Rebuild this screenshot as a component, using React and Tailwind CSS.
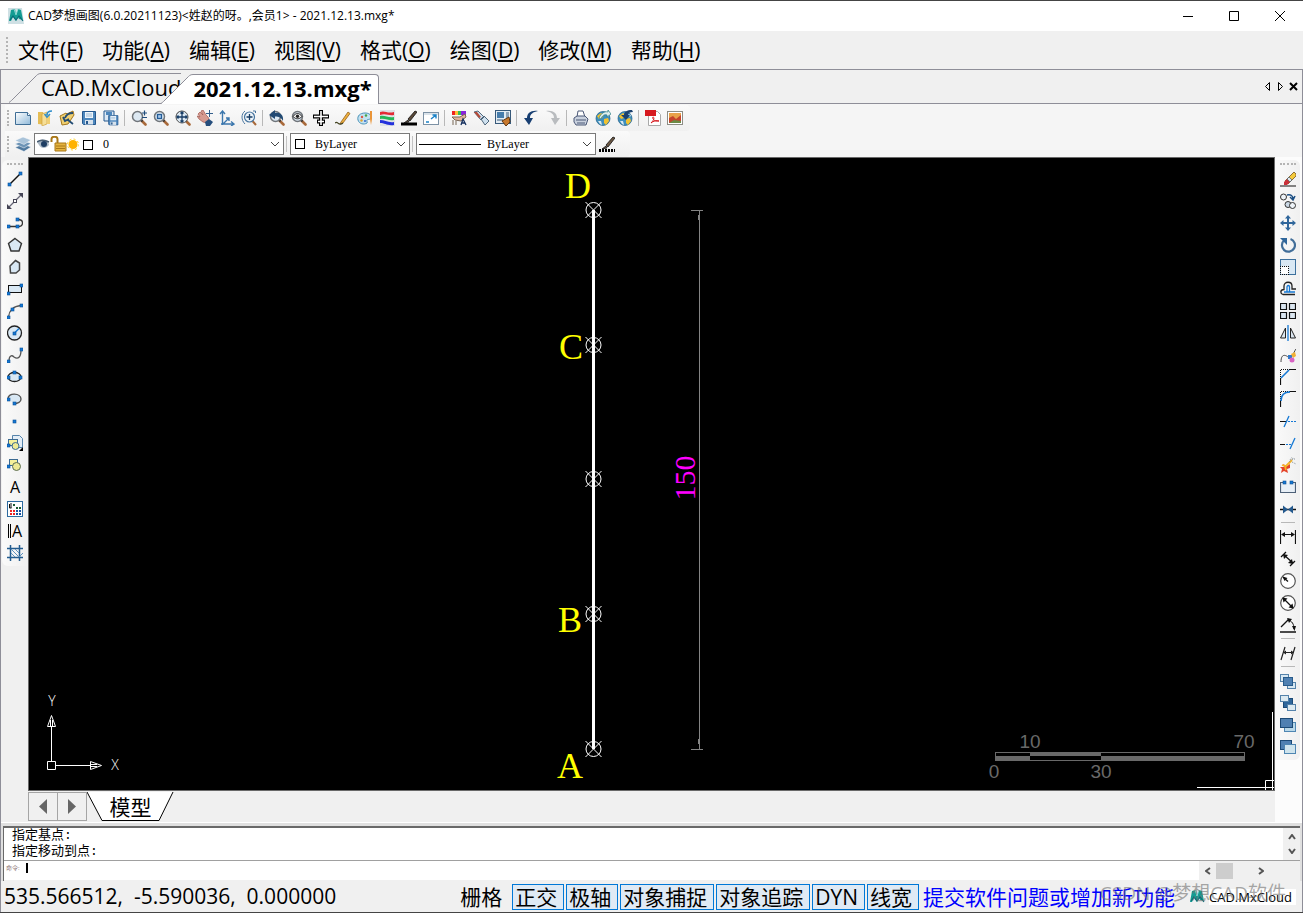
import { useState } from "react";

const MENUS = [
  ["文件", "F"],
  ["功能", "A"],
  ["编辑", "E"],
  ["视图", "V"],
  ["格式", "O"],
  ["绘图", "D"],
  ["修改", "M"],
  ["帮助", "H"],
];

const MODES = ["正交", "极轴", "对象捕捉", "对象追踪", "DYN", "线宽"];

// blue grip square used by most of the draw icons
function Grip({ x, y }) {
  return <rect x={x - 1} y={y - 1} width="3" height="3" fill="#1478d4" stroke="#0b4f94" strokeWidth=".6" />;
}

function Lens({ children }) {
  return (
    <>
      <path d="M10 10l4.5 4.5" stroke="#a8693a" strokeWidth="2.6" strokeLinecap="round" />
      <path d="M9.5 9.5l2 2" stroke="#333" strokeWidth="2" />
      <circle cx="6.5" cy="6.5" r="5" fill="#dce8f2" stroke="#70757a" strokeWidth="1.5" />
      {children}
    </>
  );
}

function Globe({ children }) {
  return (
    <>
      <circle cx="8" cy="8.5" r="7" fill="#3f8fbd" stroke="#215f86" strokeWidth=".7" />
      <path d="M2 6l4-3 3 2-2 3-3 1zM9 9l4-1 1 3-3 4-2-2z" fill="#f2c230" />
      <path d="M3 11l3 0 1 4-2-1zM11 4l3 1-1 2z" fill="#d9e8ef" />
      {children}
    </>
  );
}

const floppy = (
  <>
    <path d="M1.5 1.5h13v13h-12l-1-1z" fill="#4d87bd" stroke="#25588e" />
    <rect x="4" y="2" width="8" height="6" fill="#eef5fb" />
    <path d="M5 4h6M5 6h6" stroke="#9bb9d4" />
    <rect x="4" y="10" width="8" height="4.5" fill="#d7e2ec" />
    <rect x="5" y="11" width="2" height="3" fill="#25588e" />
  </>
);

const sheet = (
  <>
    <defs>
      <linearGradient id="sheet" x1="0" y1="0" x2="1" y2="1">
        <stop offset="0" stopColor="#fff" />
        <stop offset="1" stopColor="#8fb9d9" />
      </linearGradient>
    </defs>
    <path d="M.5 2.5h12l3 3v9H.5z" fill="url(#sheet)" stroke="#3f6e96" />
    <path d="M12.5 2.5v3h3" fill="#fff" stroke="#3f6e96" />
  </>
);

const MAIN_TOOLS = [
  [
    ["新建", sheet],
    ["打开", <>
      <path d="M1 2h5l1 2h2v11l-8-1z" fill="#e5bd55" />
      <path d="M5 4l5-2v12l-5 2z" fill="#f6df97" stroke="#c99b35" strokeWidth=".6" />
      <path d="M10 5h3v9h-3z" fill="#f0cf77" />
      <path d="M15 1c-3 0-5 1-5 4M7.500 4l2.500 3 3-3" stroke="#2e8ecb" strokeWidth="1.6" fill="none" />
    </>],
    ["打开云图", <>
      <path d="M1 6l6-3 1 1 6-3 1 4-6 9-6 1z" fill="#efcf70" stroke="#a2771e" />
      <path d="M14 3c-5 0-7 2-8 5M4 7l2 4 4-2M9 10l5 4" stroke="#244d74" strokeWidth="1.8" fill="none" />
    </>],
    ["保存", floppy],
    ["另存为", <>
      <path d="M1 1h10v10H1z" fill="#dce8f4" stroke="#25588e" />
      <path d="M3 2h6v3H3z" fill="#4d87bd" />
      <g transform="translate(4.5 4.5) scale(.72)">{floppy}</g>
    </>],
  ],
  [
    ["实时缩放", <><Lens /><path d="M11 3h5M13.5 .5v5M11 7.5h5" stroke="#1f4c7c" strokeWidth="1.2" /></>],
    ["窗口缩放", <Lens><rect x="4.5" y="4.5" width="4" height="4" fill="#a9c9ea" stroke="#235c98" strokeWidth="1.3" /></Lens>],
    ["范围缩放", <Lens><circle cx="7" cy="7" r="6" fill="#dce8f2" stroke="#555" /><path d="M7 2v10M2 7h10M5.5 3.5L7 2l1.5 1.5M5.5 10.5L7 12l1.5-1.5M3.5 5.5L2 7l1.5 1.5M10.5 5.5L12 7l-1.5 1.5" stroke="#173d66" fill="none" strokeWidth="1.3" /></Lens>],
    ["平移", <>
      <path d="M1 4l2-2 3 3-2-4 2-1 3 5 2 2 1 2-2 4-4-1-4-3-2-3 3 1z" fill="#d69b91" stroke="#a0574f" strokeWidth=".7" />
      <path d="M8 12l4-3 4 3-3 4H9z" fill="#254d7c" />
      <path d="M12.5 0v7M9 3.5h7" stroke="#335f8c" />
    </>],
    ["坐标系", <path d="M3.5 15V2M1 4l2.5-3L6 4M2 14h13M12 11.5l3 2.5-3 2M4 14l6-6M7 8h3v3" stroke="#3c77ad" strokeWidth="1.4" fill="none" />],
    ["动态缩放", <>
      <path d="M11.5 11l3.500 4" stroke="#a8693a" strokeWidth="2" />
      <circle cx="8.5" cy="7" r="5" fill="#edf4fa" stroke="#47759f" strokeWidth="1.2" />
      <path d="M8.5 4v6M5.500 7h6" stroke="#173d66" strokeWidth="1.3" />
      <path d="M4 1C0 4 0 10 4 14M12 1h2.500v2" stroke="#47759f" fill="none" />
    </>],
  ],
  [
    ["上一视图", <Lens><path d="M14 11c1-7-4-9-8-8V0L0 5l6 4V6.500c4 0 6 1 8 4.500z" fill="#224a73" /></Lens>],
    ["查看", <Lens><path d="M2 6.5c3-4 6-4 9 0-3 3-6 3-9 0z" fill="#fff" stroke="#222" /><circle cx="6.5" cy="6.3" r="1.7" fill="#222" /></Lens>],
    ["对齐", <>
      <path d="M8 0v16M0 6.500h16M4 11.500h8" stroke="#000" strokeWidth="4" />
      <path d="M8 1v14M1 6.500h14M5 11.500h6" stroke="#fff" strokeWidth="1.6" />
    </>],
    ["画笔", <>
      <path d="M6 12l7-10 2 1.5L8 13l-3 1z" fill="#edb13e" stroke="#95601d" strokeWidth=".8" />
      <path d="M0 13c3-3 3 4 8 0" stroke="#442" fill="none" strokeWidth="1.3" />
    </>],
    ["颜色", <>
      <path d="M8 3c-5 0-8 3-7 7s6 5 9 3c1-1-1-2 0-3s4 0 4-3-3-4-6-4z" fill="#c3e2f1" stroke="#4a93b8" />
      <circle cx="5" cy="7" r="1.2" fill="#d54" /><circle cx="9" cy="5.5" r="1.2" fill="#47a447" /><circle cx="4.5" cy="10.5" r="1.2" fill="#e0a22e" /><circle cx="8" cy="11" r="1" fill="#36c" />
      <path d="M13 1h2v8l-1 6-1-6z" fill="#ea9538" />
    </>],
    ["图层颜色", <>
      <rect x="1" y="0" width="15" height="16" fill="#dfe3e6" />
      <path d="M1 2c5-2 7 2 14 0v3C9 6 7 3 1 5z" fill="#e42a34" /><path d="M1 6c5-1 8 2 14 1v3C9 11 7 8 1 9z" fill="#26b657" /><path d="M1 10c5 0 8 3 14 2v3c-7 1-9-2-14-2z" fill="#2431dc" />
    </>],
    ["线型", <><path d="M0 14h16" stroke="#000" strokeWidth="3" /><path d="M3 13l4-3 1 2zM7 9L14 1l2 1-7 9z" fill="#5c4a38" stroke="#111" strokeWidth=".8" /></>],
    ["全屏", <><rect x=".5" y="2.5" width="15" height="12" fill="#fff" stroke="#7c91a4" /><path d="M1 4h14" stroke="#b5c6d4" /><path d="M3 12h3M8 9l5-4M9.5 5H13v3.5" stroke="#1a82c8" strokeWidth="1.4" fill="none" /></>],
  ],
  [
    ["特性匹配", <>
      <path d="M1 1h3v4H1z" fill="#e22" /><path d="M4 1h3v4H4z" fill="#fb3" /><path d="M7 1h3v4H7z" fill="#3b5" /><path d="M10 1h5v4h-5z" fill="#82d" />
      <path d="M1 7h8l5-3 1 3-5 4-6-1zM2 10v5M5 11v4" fill="#e3b39c" stroke="#765" />
      <path d="M10 15l2-6 3 6M11 13h3" stroke="#16315f" fill="none" strokeWidth="1.3" />
    </>],
    ["清理", <><path d="M1 2l4-1 6 6-3 3zM8 9l3-3 5 5-4 4z" fill="#cfe1ef" stroke="#50677b" /><path d="M1 2l5 6 2-1-4-5z" fill="#b44b39" /></>],
    ["图块", <><rect x=".5" y=".5" width="15" height="13" fill="#e3ebf1" stroke="#37597a" /><rect x="2" y="2" width="7" height="6" fill="#467cab" /><path d="M11 3h3M11 5h3M11 7h3M2 10h6" stroke="#37597a" /><path d="M7 11l7-4 1 5-4 4z" fill="#c7782d" stroke="#613611" /></>],
  ],
  [
    ["撤销", <path d="M15 1C8 0 4 3 4 8H1l5 7 4-7H7c0-4 3-6 8-7z" fill="#183f72" />],
    ["重做", <path d="M1 1c7-1 11 2 11 7h3l-5 7-4-7h3c0-4-3-6-8-7z" fill="#b9bcbf" />],
  ],
  [
    ["打印", <><path d="M4 7l1-6h5l2 6" fill="#fff" stroke="#4b5877" /><path d="M1 8l3-2h8l3 3-2 6H3l-2-3z" fill="#c9d1de" stroke="#4b5877" /><path d="M3 10h10M4 13h8" stroke="#4b5877" /></>],
    ["云端上传", <Globe><path d="M4 8c2-5 6-7 9-6V0l3 4-4 3V5C9 4 7 6 6 9z" fill="#dfeeed" stroke="#287b82" strokeWidth=".7" /></Globe>],
    ["云端下载", <Globe><path d="M15 0c-5 0-8 2-8 5H4l5 5 4-5h-2c0-2 2-3 5-3z" fill="#1b416f" /></Globe>],
  ],
  [
    ["输出PDF", <><path d="M3.5 1.5h9l3 3v11h-12z" fill="#fff" stroke="#a9a9a9" /><rect x="0" y="0" width="11" height="6" fill="#d7191f" /><path d="M6 13c4-4 3-6 2-6s0 5 6 4c-2-1-6 0-8 2z" stroke="#d7191f" fill="none" /></>],
    ["输出图片", <><rect x=".5" y="1.5" width="15" height="13" fill="#fff" stroke="#8d8d85" /><rect x="2" y="3" width="12" height="10" fill="#e9a24a" /><path d="M2 13V8l4-2 3 3 5-4v8z" fill="#c5432c" /><path d="M2 13l5-3 7 1v2z" fill="#6c8b45" /></>],
  ],
];

const DRAW_TOOLS = [
  ["直线", <><path d="M3 13L13 3" stroke="#111" strokeWidth="1.5" /><Grip x={2} y={13} /><Grip x={13} y={2} /></>],
  ["构造线", <><path d="M2 14L14 2" stroke="#667" strokeWidth="1.2" /><path d="M0 16v-5l5 5zM16 0v5l-5-5z" fill="#445" /><rect x="6.5" y="6.5" width="3" height="3" fill="#fff" stroke="#445" /></>],
  ["多段线", <><path d="M2 11.5h9M11 4.5c6 0 6 7 0 7" stroke="#333" strokeWidth="1.3" fill="none" /><Grip x={1} y={11} /><Grip x={10} y={11} /><Grip x={10} y={4} /></>],
  ["正多边形", <path d="M8 1.5l6.5 5-2.5 7.5H4L1.5 6.5z" fill="#d9e8f4" stroke="#333" strokeWidth="1.4" />],
  ["多边形", <path d="M8.500 1.500l4 2.500v7L9 14H3.500L3 7z" fill="#d9e8f4" stroke="#444" strokeWidth="1.5" />],
  ["矩形", <><rect x="1.5" y="4.5" width="13" height="7" fill="#d9e8f4" stroke="#111" /><Grip x={1} y={12} /><Grip x={14} y={4} /></>],
  ["圆弧", <><path d="M1.5 14C2 8 6 3 14 2.5" stroke="#555" strokeWidth="1.4" fill="none" /><Grip x={1} y={14} /><Grip x={5} y={6} /><Grip x={14} y={2} /></>],
  ["圆", <><circle cx="7.5" cy="8" r="7" fill="#d9e8f4" stroke="#222" strokeWidth="1.3" /><path d="M7 8.5l5-5" stroke="#1478d4" strokeWidth="1.5" /><Grip x={7} y={8} /></>],
  ["样条曲线", <><path d="M2 14c0-6 3-6 5-4 4 3 7 0 7-7" stroke="#555" strokeWidth="1.3" fill="none" /><Grip x={1} y={14} /><Grip x={14} y={2} /></>],
  ["椭圆", <><ellipse cx="7.5" cy="8" rx="6.5" ry="4.5" fill="#d9e8f4" stroke="#222" strokeWidth="1.3" /><Grip x={1} y={8} /><Grip x={13} y={8} /><Grip x={7} y={3} /></>],
  ["椭圆弧", <><path d="M1 8c0-7 13-6 13 0 0 3-3 4.5-7 4.5" fill="#d9e8f4" stroke="#555" strokeWidth="1.4" /><Grip x={1} y={8} /><Grip x={7} y={12} /></>],
  ["点", <Grip x={7} y={8} />],
  ["插入块", <><path d="M5.5 .5h7l3 3v9h-10z" fill="#e4eef7" stroke="#5583ab" /><rect x="1.5" y="4.5" width="9" height="6" fill="#f6f09a" stroke="#3b6a92" /><circle cx="8.5" cy="11" r="3.5" fill="#eee994" stroke="#3b6a92" /><path d="M16 12v4h-4z" fill="#000" /><Grip x={1} y={10} /></>],
  ["创建块", <><rect x="2.5" y="2.5" width="8" height="6" fill="#f6f09a" stroke="#3b6a92" /><circle cx="9.5" cy="9.5" r="4" fill="#eee994" stroke="#5b6d52" /><Grip x={1} y={9} /></>],
  ["单行文字", "A"],
  ["颜色索引", <><rect x=".5" y=".5" width="15" height="15" fill="#fff" stroke="#2d6ba0" /><path d="M4 2v5M2.5 3v4h2" stroke="#111" fill="none" /><path d="M6 3h2v2H6zM9 6h2v2H9zM12 6h2v2h-2z" fill="#195b32" /><path d="M3 9h2v2H3zM6 9h2v2H6zM3 12h2v2H3zM6 12h2v2H6z" fill="#e22" /><path d="M9 9h2v2H9zM12 9h2v2h-2zM9 12h2v2H9zM12 12h2v2h-2z" fill="#174fa0" /></>],
  ["多行文字", "‖A"],
  ["图案填充", <><path d="M3.5 0v16M12.5 0v16M0 3.5h16M0 12.5h16" stroke="#235c8f" strokeWidth="1.5" /><path d="M4 8l4 4M4 4l8 8M8 4l4 4M12 12l4-4" stroke="#5d91bd" /></>],
];

const layers = (a, b, c) => (
  <>
    <rect x=".5" y="1.5" width="8" height="7" fill={a} stroke="#5482aa" />
    <rect x="7.5" y="9.5" width="8" height="6" fill={c} stroke="#5482aa" />
    <rect x="3.5" y="4.5" width="9" height="8" fill={b} stroke="#285b8b" />
  </>
);

const EDIT_TOOLS = [
  [
    ["删除", <><path d="M0 15h16" stroke="#111" /><path d="M5 10L14 1l2 2v2l-8 8z" fill="#f5ca3b" stroke="#74521b" strokeWidth=".8" /><path d="M4 11l3-3 3 3-3 3H4z" fill="#c9303a" /><path d="M7 8l2-2 3 3-2 2z" fill="#dfe6ee" stroke="#345" strokeWidth=".6" /></>],
    ["复制", <><circle cx="3.5" cy="4" r="3" fill="#eef3f8" stroke="#333" /><circle cx="8" cy="11.500" r="3" fill="#cbd9e6" stroke="#333" /><circle cx="12.5" cy="12.5" r="3" fill="#eef3f8" stroke="#333" /><path d="M7 2c4-1 6 1 6 4M10 4l3 3 2-4" stroke="#1b4e83" strokeWidth="1.5" fill="none" /></>],
    ["移动", <path d="M8 0l3 3.5H9V7h3.5V5L16 8l-3.5 3V9H9v3.5h2L8 16l-3-3.5h2V9H3.5v2L0 8l3.5-3v2H7V3.5H5z" fill="#2f669b" />],
    ["旋转", <><path d="M4.5 3a6.500 6.500 0 1 0 6-1" stroke="#426e99" strokeWidth="2.2" fill="none" /><path d="M0 1h7v7z" fill="#2f669b" /></>],
    ["缩放", <><rect x=".5" y=".5" width="15" height="15" fill="#d9e8f4" stroke="#3d709d" /><path d="M.5 7.5h8v8h-8z" fill="#fff" /><path d="M0 7.500h9M8.500 7v9M.500 7v9M0 15.500h9" stroke="#111" strokeDasharray="1 1" /></>],
    ["偏移", <><path d="M15 13.500H3c-3-1-3-5 1-5V5c0-5 8-5 8 0v3h4" stroke="#222" strokeWidth="1.3" fill="none" /><path d="M15 11H4M7 10.500V6c0-2 2.500-2 2.500 0v4.500" stroke="#1478d4" strokeWidth="1.3" fill="none" /></>],
    ["阵列", <path d="M.5.5h6v6h-6zM9.5.5h6v6h-6zM.5 9.5h6v6h-6zM9.5 9.5h6v6h-6z" fill="#dbe6f0" stroke="#111" strokeWidth="1.2" />],
    ["镜像", <><path d="M5.5 3v10H.5zM10.5 3v10h5z" fill="#dbe6f0" stroke="#222" /><path d="M8 0v16" stroke="#1478d4" strokeWidth="1.3" /></>],
    ["编辑样条", <><path d="M1 15c0-10 6-6 7-5 4 3 5-4 8-8" stroke="#444" fill="none" /><path d="M8 8h4v4H8z" fill="#2f78ca" /><path d="M11 7l4-2 1 4-3 2z" fill="#f0b034" /><circle cx="12" cy="13" r="2.5" fill="#d863c3" /></>],
    ["倒角", <><path d="M1 .5h8M.5 1v8" stroke="#111" strokeDasharray="1 1" /><path d="M9 .5h7M.5 9v7" stroke="#111" strokeWidth="1.2" /><path d="M1 9l8-8" stroke="#1478d4" strokeWidth="1.6" /></>],
    ["圆角", <><path d="M1 .5h8M.5 1v8" stroke="#111" strokeDasharray="1 1" /><path d="M9 .5h7M.5 9v7" stroke="#111" strokeWidth="1.2" /><path d="M1 10C1 4 4 1 10 1" stroke="#1478d4" strokeWidth="1.6" fill="none" /></>],
    ["修剪", <><path d="M0 8.5h6" stroke="#111" /><path d="M8 8.5h8" stroke="#1478d4" strokeDasharray="2 1" /><path d="M4 14L9 3" stroke="#1478d4" strokeWidth="1.3" /></>],
    ["延伸", <><path d="M0 9.5h5" stroke="#111" /><path d="M6 9.5h5" stroke="#1478d4" strokeDasharray="2 1" /><path d="M10 14l5-11" stroke="#1478d4" strokeWidth="1.3" /></>],
    ["分解", <><path d="M0 10l4 0-1-3 4 2 3-2 0 4-3 1 1 4-4-2-3 2 1-4z" fill="#e4432a" /><path d="M5 10l7-7M2 8l3 1 1 4" stroke="#f5b529" strokeWidth="1.8" fill="none" /><path d="M10 3l2-3M12 5l4 2M12 2h3M9 5l5-4" stroke="#8a939b" strokeDasharray="1 1" /></>],
    ["打断", <><path d="M3 3.5H.5v10h15v-10H13" stroke="#4d6077" strokeWidth="1.2" fill="#e8eff6" /><Grip x={4} y={3} /><Grip x={11} y={3} /></>],
    ["合并", <><path d="M0 8.5h16" stroke="#111" strokeWidth="1.500" /><path d="M3 4.500l5 4L3 12.500zM13 4.500l-5 4 5 4z" fill="#24598d" /></>],
  ],
  [
    ["线性标注", <><path d="M.5 1v14M15.5 1v14M2 5.5h12" stroke="#111" strokeWidth="1.2" /><path d="M1 5.5L5 3v5zM15 5.5L11 3v5z" fill="#111" /></>],
    ["对齐标注", <><path d="M1 6l5-5M10 15l5-5M4 4l9 8" stroke="#111" strokeWidth="1.3" /><path d="M3 3l1 5 4-4zM13 13l-1-5-4 4z" fill="#111" /></>],
    ["半径标注", <><circle cx="8" cy="8" r="7.3" fill="#fff" stroke="#555" strokeWidth="1.2" /><path d="M3 4l5 4.5" stroke="#111" strokeWidth="1.3" /><path d="M2.5 3.5l2 4.5 3-3z" fill="#111" /></>],
    ["直径标注", <><circle cx="8" cy="8" r="7.3" fill="#fff" stroke="#555" strokeWidth="1.2" /><path d="M3 3l10 10" stroke="#111" strokeWidth="1.3" /><path d="M2.5 2.5l1 5 4-4zM13.5 13.5l-1-5-4 4z" fill="#111" /></>],
    ["角度标注", <><path d="M0 15h16M1 10l8-8" stroke="#111" strokeWidth="1.3" /><path d="M8 3c4 1 6 4 6 9" stroke="#111" fill="none" /><path d="M7 1l5 1-3 4zM12 9h4l-1.5 5z" fill="#111" /></>],
  ],
  [["倾斜标注", <><path d="M1 15L5 2M11 15l4-13M4 7.5h9" stroke="#222" strokeWidth="1.2" /><path d="M3 7.5l3-2v4zM14 7.5l-3-2v4z" fill="#222" /></>]],
  [
    ["置于中间", layers("#d8e8f2", "#4f80b2", "#d8e8f2")],
    ["置于之间", <><rect x="3.5" y="3.5" width="9" height="9" fill="#2f669b" stroke="#1c4a76" /><rect x=".5" y=".5" width="8" height="6" fill="#dce9f0" stroke="#5482aa" /><rect x="7.5" y="9.5" width="8" height="6" fill="#dce9f0" stroke="#5482aa" /></>],
    ["前置", <><rect x="4.5" y="5.5" width="11" height="9" fill="#b9d8e9" stroke="#4e86b2" /><rect x=".5" y="1.5" width="12" height="9" fill="#4f80b2" stroke="#1c4a76" /></>],
    ["后置", <><rect x=".5" y="1.5" width="11" height="9" fill="#4f80b2" stroke="#1c4a76" /><rect x="4.5" y="5.5" width="11" height="9" fill="#cfe4ed" stroke="#4e86b2" /></>],
  ],
];

function Tool({ label, children }) {
  return (
    <button type="button" aria-label={label} className="flex size-[22px] shrink-0 items-center justify-center">
      {typeof children === "string" ? (
        <span className="flex items-center gap-px text-base leading-5">
          {children.length > 1 && <span className="h-3.5 w-[3px] border-x border-black" />}
          {children.slice(-1)}
        </span>
      ) : (
        <svg width="16" height="16" viewBox="0 0 16 16" fill="none" aria-hidden="true">
          {children}
        </svg>
      )}
    </button>
  );
}

function Handle({ vertical }) {
  return (
    <span
      className={
        vertical
          ? "mx-auto h-0 w-4 border-t-2 border-dotted border-[#b4b4b4]"
          : "h-4 w-0 border-l-2 border-dotted border-[#b4b4b4]"
      }
    />
  );
}

function Combo({ label, value, className, pad, children }) {
  return (
    <div className={`relative h-[22px] shrink-0 ${className}`}>
      <select
        aria-label={label}
        className={`block size-full appearance-none border border-[#7a7a7a] bg-white font-['Liberation_Serif',serif] text-xs text-black ${pad}`}
      >
        <option>{value}</option>
      </select>
      <div className="pointer-events-none absolute inset-0 flex items-center pr-1 pl-[3px]">
        {children}
        <svg className="ml-auto" width="10" height="6" viewBox="0 0 10 6" fill="none" stroke="#444">
          <path d="M1 1l4 4 4-4" />
        </svg>
      </div>
    </div>
  );
}

function Logo({ size, tile }) {
  return (
    <svg width={size} height={size} viewBox="0 0 16 16" aria-hidden="true" className="shrink-0">
      {tile && <path d="M0 0h14l2 16H0z" fill="#cfe0e4" />}
      <path d="M3 2l4-1 1 5 2-5 3 1 2 10-4-1-1-2-2 4-3-4-2 4H1z" fill="#149c93" />
      <path d="M2 12l3-4 3 4 3-4 4 5" fill="none" stroke="#0b6d78" strokeWidth="1.2" />
      <path d="M6 1l2 6 2-6" fill="none" stroke="#9fe3dc" strokeWidth=".8" />
    </svg>
  );
}

function DocTab({ title, active, onClick }) {
  return (
    <button
      type="button"
      onClick={onClick}
      className={`relative flex h-[30px] items-stretch ${active ? "z-10 -mb-px font-bold" : "-mr-5"}`}
    >
      <svg width="32" height="30" viewBox="0 0 32 30" className="shrink-0" aria-hidden="true">
        <path d="M0 30C2 28 2 28 3 27L26 4C28 2 29 .5 32 .5V30z" fill={active ? "#fff" : "#f0f0f0"} />
        <path d="M0 29.5C2 28 2 28 3 27L26 4C28 2 29 .5 32 .5" fill="none" stroke="#8e8e98" />
      </svg>
      <span
        className={
          active
            ? "rounded-tr-sm border-t border-r border-[#8e8e98] bg-white pr-1.5 text-[22px] leading-[26px]"
            : "border-t border-[#8e8e98] bg-[#f0f0f0] text-[22px] leading-[26px]"
        }
      >
        {title}
      </span>
    </button>
  );
}

const POINTS = [52, 187, 321, 456, 591];
const LABELS = [
  ["D", 549, 40],
  ["C", 542, 201],
  ["B", 541, 474],
  ["A", 541, 620],
];

function Drawing() {
  return (
    <div className="relative min-h-0 flex-1 overflow-hidden border border-[#696969] bg-black">
      <svg className="absolute inset-0 size-full" fill="none" stroke="#fff">
        <path d="M564.5 52V591" strokeWidth="3" />
        {POINTS.map((y) => (
          <g key={y}>
            <circle cx="564.5" cy={y} r="7.5" />
            <path d={`M556.5 ${y - 8}l16 16m0-16l-16 16`} />
          </g>
        ))}
        <path d="M662 52.5h12M662 591.5h12M670.5 52V592M669.5 57v5M669.5 581v5" stroke="#848484" />
        <g fill="#ff0" stroke="none" fontFamily="'Liberation Serif', serif" fontSize="36" textAnchor="middle">
          {LABELS.map(([name, x, y]) => (
            <text key={name} x={x} y={y}>
              {name}
            </text>
          ))}
        </g>
        <text
          transform="translate(666 320) rotate(-90)"
          fill="#f0f"
          stroke="none"
          fontFamily="'Liberation Serif', serif"
          fontSize="30"
          textAnchor="middle"
        >
          150
        </text>
      </svg>

      {/* UCS axes */}
      <svg className="absolute bottom-[15px] left-[11px]" width="85" height="85" fill="none" stroke="#fff">
        <path d="M7.5 71.5h8v8h-8zM11.5 71V36M15 75.5h35M7.5 36.5h8l-4-11zM10.5 36V30M12.5 36V30M50.5 71.5v8l11-4zM51 74.5h6M51 76.5h6" />
        <g fill="#fff" stroke="none" fontFamily="'Open Sans', sans-serif" fontWeight="300" fontSize="14" textAnchor="middle">
          <text x="12" y="16">Y</text>
          <text x="75" y="80">X</text>
        </g>
      </svg>

      {/* scale bar */}
      <svg className="absolute right-[14px] bottom-[5px]" width="280" height="55" fill="#696969">
        <rect x="15.5" y="22.5" width="249" height="8" fill="none" stroke="#696969" />
        <path d="M15 26h35v5H15zM50 22h71v4H50zM121 26h144v5H121z" />
        <g fontFamily="'Liberation Sans', sans-serif" fontSize="19" textAnchor="middle">
          <text x="50" y="18">10</text>
          <text x="264" y="18">70</text>
          <text x="14" y="48">0</text>
          <text x="121" y="48">30</text>
        </g>
      </svg>

      {/* crosshair in the corner */}
      <svg className="absolute right-0 bottom-0" width="80" height="80" fill="none" stroke="#fff">
        <path d="M78.5 2V80M3 77.5h77M71.5 80V70.5H80" />
      </svg>
    </div>
  );
}

export default function App() {
  const [tab, setTab] = useState("2021.12.13.mxg*");
  const [modes, setModes] = useState(MODES);
  const [command, setCommand] = useState("");

  const toggleMode = (m) =>
    setModes((on) => (on.includes(m) ? on.filter((x) => x !== m) : [...on, m]));

  return (
    <div className="flex h-screen flex-col overflow-hidden border-t border-b border-[#444] bg-[#f0f0f0] font-['Open_Sans','Noto_Sans_CJK_SC',sans-serif] text-black">
      <header className="flex h-[30px] shrink-0 items-center bg-white pl-2">
        <Logo size={16} tile />
        <h1 className="ml-1 text-xs">CAD梦想画图(6.0.20211123)&lt;姓赵的呀。,会员1&gt; - 2021.12.13.mxg*</h1>
        <div className="ml-auto flex">
          {[
            ["最小化", "M0 5.5h10"],
            ["最大化", "M.5.5h9v9h-9z"],
            ["关闭", "M0 0l10 10M10 0L0 10"],
          ].map(([label, d]) => (
            <button key={label} type="button" aria-label={label} className="flex h-[30px] w-[46px] items-center justify-center">
              <svg width="10" height="10" viewBox="0 0 10 10" fill="none" stroke="#000">
                <path d={d} />
              </svg>
            </button>
          ))}
        </div>
      </header>

      <nav className="flex h-[38px] shrink-0 items-center bg-[#f0f0f0] pl-1.5 text-[21px]">
        <span className="mr-2.5 h-[26px] w-0 border-l-2 border-dotted border-[#b4b4b4]" />
        <div className="flex gap-[19px]">
          {MENUS.map(([name, key]) => (
            <button key={key} type="button" className="leading-7 whitespace-nowrap">
              {name}(<span className="underline underline-offset-2">{key}</span>)
            </button>
          ))}
        </div>
      </nav>

      <div className="flex min-h-0 flex-1 flex-col border-x border-t border-[#8e8e98]">
        <div className="flex h-[34px] shrink-0 items-end border-b border-[#8e8e98] pl-2">
          {["CAD.MxCloud", "2021.12.13.mxg*"].map((t) => (
            <DocTab key={t} title={t} active={t === tab} onClick={() => setTab(t)} />
          ))}
          <div className="ml-auto flex gap-1 self-center pr-1">
            {[
              ["上一个", "M6.500 .5v8L2.500 4.500z"],
              ["下一个", "M2.500 .5v8l4-4z"],
              ["关闭图纸", "M1 1l7 7M8 1L1 8"],
            ].map(([label, d], i) => (
              <button key={label} type="button" aria-label={label}>
                <svg width="9" height="9" viewBox="0 0 9 9" fill="none" stroke="#000" strokeWidth={i === 2 ? 2 : 1}>
                  <path d={d} />
                </svg>
              </button>
            ))}
          </div>
        </div>

        <div className="flex shrink-0 flex-col items-start bg-[#f5f5f5] pt-px pl-1">
          <div className="flex h-[26px] items-center rounded-r bg-linear-to-b from-[#fafafa] to-[#f0f0f0] pr-1 pl-0.5">
            <span className="mr-[3px] flex w-0.5">
              <Handle />
            </span>
            {MAIN_TOOLS.map((group, i) => (
              <div
                key={i}
                className={
                  i
                    ? "relative flex pl-1.5 before:absolute before:top-[3px] before:left-0.5 before:h-4 before:w-px before:bg-[#b8b8b8]"
                    : "flex"
                }
              >
                {group.map(([label, icon]) => (
                  <Tool key={label} label={label}>
                    {icon}
                  </Tool>
                ))}
              </div>
            ))}
          </div>
          <div className="flex h-[26px] items-center rounded-r bg-linear-to-b from-[#fafafa] to-[#f0f0f0] pr-3 pl-0.5">
            <span className="mr-[3px] flex w-0.5">
              <Handle />
            </span>
            <Tool label="图层管理">
              <path d="M0 11.5l8-3.5 8 3-7 4.5z" fill="#4f799f" stroke="#fff" strokeWidth=".5" />
              <path d="M0 8l8-3.5 8 3-7 4.5z" fill="#6d94b6" stroke="#fff" strokeWidth=".5" />
              <path d="M0 4.5L8 1l8 3-7 4.5z" fill="#a9c3d9" stroke="#fff" strokeWidth=".5" />
            </Tool>
            <Combo label="图层" value="0" className="w-[250px]" pad="pl-[68px]">
              <svg width="60" height="16" viewBox="0 0 60 16" fill="none">
                <path d="M0 6c3-3 7-3 11-1l1 4c-3 4-8 4-10 0z" fill="#aab8c5" />
                <path d="M0 6c4-3 8-2 12 0" stroke="#465b70" strokeWidth="1.5" />
                <circle cx="7" cy="8" r="3" fill="#1e3d63" />
                <path d="M14.5 6V3c0-3 6-3 6 0v5" stroke="#a97819" strokeWidth="2" />
                <path d="M18 7h11v8H18z" fill="#e5b33e" stroke="#a97819" />
                <path d="M19 10h9M19 12.5h9" stroke="#a97819" />
                <circle cx="36" cy="8.5" r="4.5" fill="#ffb300" />
                <circle cx="36" cy="8.5" r="5.5" stroke="#ffd21f" strokeDasharray="2 2.3" />
                <rect x="46.5" y="4.5" width="9" height="9" fill="#fff" stroke="#000" />
              </svg>
            </Combo>
            <span className="mx-0.5 h-4 w-px bg-[#c3c3c3]" />
            <Combo label="颜色" value="ByLayer" className="ml-px w-[120px]" pad="pl-6">
              <span className="ml-0.5 size-2.5 border border-black" />
            </Combo>
            <span className="mx-0.5 h-4 w-px bg-[#c3c3c3]" />
            <Combo label="线型" value="ByLayer" className="ml-px w-[180px]" pad="pl-[70px]">
              <span className="h-px w-[62px] bg-black" />
            </Combo>
            <Tool label="线宽设置">
              <path d="M0 14.5h16" stroke="#000" strokeWidth="3" strokeDasharray="2 1" />
              <path d="M3 13l4-3 1 2zM7 9l7-8 2 1-7 9z" fill="#6d5843" stroke="#111" strokeWidth=".8" />
            </Tool>
          </div>
        </div>

        <div className="flex min-h-0 flex-1">
          <aside className="w-[27px] shrink-0 pt-[3px] pl-px">
            <div className="flex flex-col items-center rounded-l-md bg-linear-to-r from-[#fafafa] to-[#f0f0f0] pt-[3px] pb-0.5">
              <span className="mb-[3px] flex w-4">
                <Handle vertical />
              </span>
              {DRAW_TOOLS.map(([label, icon]) => (
                <Tool key={label} label={label}>
                  {icon}
                </Tool>
              ))}
            </div>
          </aside>

          <main className="flex min-w-0 flex-1 flex-col">
            <Drawing />
            <div className="flex h-[31px] shrink-0 items-start pt-px">
              <button type="button" aria-label="上一布局" className="flex h-[29px] w-[30px] items-center justify-center border border-[#a5a5a5]">
                <svg width="10" height="16" fill="#666"><path d="M9 0v15L1 7.5z" /></svg>
              </button>
              <button type="button" aria-label="下一布局" className="flex h-[29px] w-[29px] items-center justify-center border border-l-0 border-[#a5a5a5]">
                <svg width="10" height="16" fill="#666"><path d="M1 0v15l8-7.5z" /></svg>
              </button>
              <button type="button" className="relative h-[29px] w-[87px] text-[21px] leading-7">
                <svg className="absolute inset-0" width="87" height="29" viewBox="0 0 87 29" fill="#fff" stroke="#000">
                  <path d="M0 0l15 28.5h57L86 0" />
                </svg>
                <span className="relative">模型</span>
              </button>
            </div>
          </main>

          <aside className="w-[27px] shrink-0 bg-[#fcfcfc] pt-[3px] pr-0.5">
            <div className="flex flex-col items-center rounded-r-md bg-linear-to-r from-[#fafafa] to-[#f0f0f0] pt-[3px] pb-0.5">
              <span className="mb-[3px] flex w-4">
                <Handle vertical />
              </span>
              {EDIT_TOOLS.map((group, i) => (
                <div
                  key={i}
                  className={
                    i
                      ? "relative flex flex-col items-center pt-1.5 before:absolute before:top-0.5 before:left-1 before:h-px before:w-3.5 before:bg-[#b8b8b8]"
                      : "flex flex-col items-center"
                  }
                >
                  {group.map(([label, icon]) => (
                    <Tool key={label} label={label}>
                      {icon}
                    </Tool>
                  ))}
                </div>
              ))}
            </div>
          </aside>
        </div>

        <section className="shrink-0 border-t border-white bg-[#e0e0e0] px-0.5 pt-[3px]">
          <div className="border-t-2 border-l border-[#696969] bg-white">
            <div className="flex h-[33px] border-b border-[#a0a0a0]">
              <div className="flex-1 pl-2 font-['Liberation_Mono','Noto_Sans_CJK_SC',monospace] text-[13px] leading-4">
                <p>指定基点:</p>
                <p>指定移动到点:</p>
              </div>
              <div className="flex w-[17px] flex-col items-center justify-between bg-[#f0f0f0] py-1.5">
                <svg width="8" height="6" fill="none" stroke="#555" strokeWidth="2"><path d="M1 5l3-4 3 4" /></svg>
                <svg width="8" height="6" fill="none" stroke="#555" strokeWidth="2"><path d="M1 1l3 4 3-4" /></svg>
              </div>
            </div>
            <div className="flex h-5 items-stretch border-b border-[#f0f0f0]">
              <label htmlFor="command" className="pt-px pl-0.5 text-[6px] leading-3 whitespace-nowrap text-[#8b7474]">
                命令:
              </label>
              <span className="mt-0.5 ml-1.5 h-2.5 w-0.5 bg-black" />
              <input
                id="command"
                value={command}
                onChange={(e) => setCommand(e.target.value)}
                className="min-w-0 flex-1 px-1 text-xs outline-none"
              />
              <div className="flex w-[71px] items-center justify-between bg-[#f0f0f0] px-1.5">
                <svg width="6" height="8" fill="none" stroke="#555" strokeWidth="2"><path d="M5 1L1 4l4 3" /></svg>
                <span className="mr-5 h-4 w-[17px] bg-[#cdcdcd]" />
                <svg width="6" height="8" fill="none" stroke="#555" strokeWidth="2"><path d="M1 1l4 3-4 3" /></svg>
              </div>
              <span className="w-[30px] bg-[#f0f0f0]" />
            </div>
          </div>
        </section>

        <footer className="relative flex h-[31px] shrink-0 items-center gap-0.5 pl-[3px] text-[21px] whitespace-nowrap">
          <output className="min-w-0 flex-1 whitespace-pre">535.566512,  -5.590036,  0.000000</output>
          <button type="button" className="mr-2 leading-6">栅格</button>
          {MODES.map((m) => (
            <button
              key={m}
              type="button"
              aria-pressed={modes.includes(m)}
              onClick={() => toggleMode(m)}
              className={`h-[26px] border pr-1.5 pl-0.5 leading-6 ${
                modes.includes(m) ? "border-[#0078d7] bg-[#dfeaf5]" : "border-transparent"
              }`}
            >
              {m}
            </button>
          ))}
          <a href="#feedback" className="ml-0.5 leading-6 text-[#00f]">
            提交软件问题或增加新功能
          </a>
          <div className="ml-3 flex h-4 items-center bg-white pr-1 text-[13px] leading-4">
            <span className="flex bg-[#f0f0f0] pr-1">
              <Logo size={16} />
            </span>
            <span>CAD.MxCloud</span>
          </div>
          <span className="w-1" />
          <span className="pointer-events-none absolute top-0 right-4 text-[19px] leading-6 text-[#707070]/60">
            CSDN @梦想CAD软件
          </span>
        </footer>
      </div>
    </div>
  );
}
